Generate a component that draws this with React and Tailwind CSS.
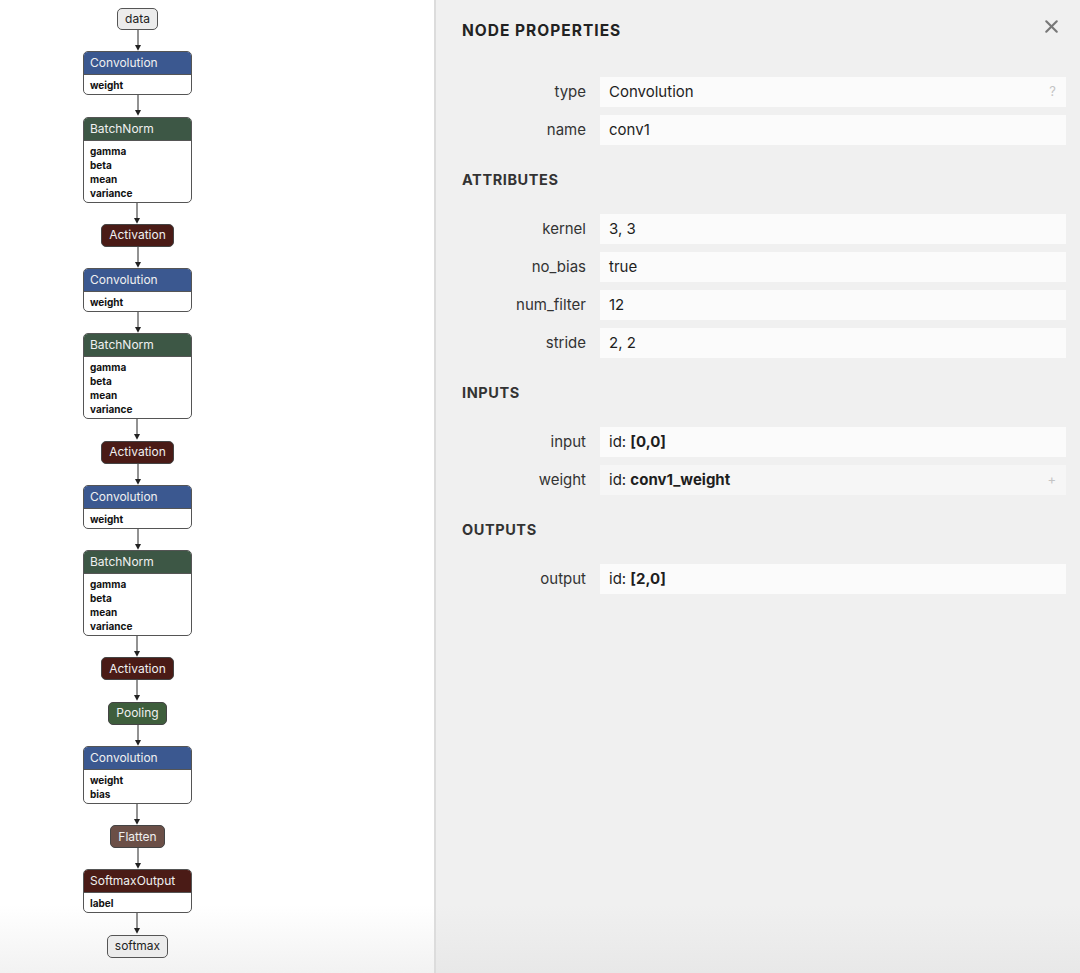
import { X } from "lucide-react";

const font = { fontFamily: "Inter, 'Noto Sans', sans-serif" };

const graph = [
  { kind: "io", label: "data", h: "h-[22px]" },
  { kind: "op", label: "Convolution", color: "bg-[#3b5890]", attrs: ["weight"] },
  { kind: "op", label: "BatchNorm", color: "bg-[#3d5745]", attrs: ["gamma", "beta", "mean", "variance"] },
  { kind: "pill", label: "Activation", color: "bg-[#4a1b16]" },
  { kind: "op", label: "Convolution", color: "bg-[#3b5890]", attrs: ["weight"] },
  { kind: "op", label: "BatchNorm", color: "bg-[#3d5745]", attrs: ["gamma", "beta", "mean", "variance"] },
  { kind: "pill", label: "Activation", color: "bg-[#4a1b16]" },
  { kind: "op", label: "Convolution", color: "bg-[#3b5890]", attrs: ["weight"] },
  { kind: "op", label: "BatchNorm", color: "bg-[#3d5745]", attrs: ["gamma", "beta", "mean", "variance"] },
  { kind: "pill", label: "Activation", color: "bg-[#4a1b16]" },
  { kind: "pill", label: "Pooling", color: "bg-[#3e5e3c]" },
  { kind: "op", label: "Convolution", color: "bg-[#3b5890]", attrs: ["weight", "bias"] },
  { kind: "pill", label: "Flatten", color: "bg-[#6b4f47]" },
  { kind: "op", label: "SoftmaxOutput", color: "bg-[#4a1b16]", attrs: ["label"] },
  { kind: "io", label: "softmax", h: "h-[23px]" },
];

function Arrow() {
  return (
    <svg
      viewBox="0 0 10 22"
      preserveAspectRatio="none"
      className="block h-[21.25px] w-[10px] shrink-0"
    >
      <line x1="5" y1="0" x2="5" y2="17" stroke="#222" strokeWidth="1" />
      <path d="M2 15.5 L5 21.5 L8 15.5 Z" fill="#222" />
    </svg>
  );
}

function GraphNode({ node }) {
  if (node.kind === "io") {
    return (
      <div
        className={
          "flex items-center rounded-[5px] border border-[#555] bg-[#ececec] px-[7px] text-[12px] text-[#222] " +
          node.h
        }
      >
        {node.label}
      </div>
    );
  }
  if (node.kind === "pill") {
    return (
      <div
        className={
          "flex h-[23px] items-center rounded-[5px] border border-[#444] px-[7px] text-[12px] text-[#f0f0f0] " +
          node.color
        }
      >
        {node.label}
      </div>
    );
  }
  return (
    <div className="w-[109px] overflow-hidden rounded-[5px] border border-[#555] bg-white">
      <div
        className={
          "flex h-[22px] items-center px-[6px] text-[12px] text-[#f0f0f0] " + node.color
        }
      >
        {node.label}
      </div>
      <div className="border-t border-[#555] px-[6px] pt-[3px] pb-[2px]">
        {node.attrs.map((a) => (
          <div key={a} className="text-[10px] font-bold leading-[14px] text-[#111]">
            {a}
          </div>
        ))}
      </div>
    </div>
  );
}

function Row({ label, children, hint, muted }) {
  return (
    <div className="flex items-center">
      <div className="w-[125px] shrink-0 pr-px text-right text-[15px] text-[#333]">
        {label}
      </div>
      <div
        className={
          "ml-[13px] flex h-[30px] flex-1 items-center justify-between pl-[9px] pr-[10px] text-[15px] text-[#1e1e1e] " +
          (muted ? "bg-[#f6f6f6]" : "bg-[#fbfbfb]")
        }
      >
        <span>{children}</span>
        {hint && <span className="text-[13px] text-[#c4c4c4]">{hint}</span>}
      </div>
    </div>
  );
}

function Section({ title }) {
  return (
    <h3 className="mt-[25px] mb-[24px] h-[20px] text-[14.5px] font-bold leading-[20px] tracking-[0.04em] text-[#333]">
      {title}
    </h3>
  );
}

export default function App() {
  return (
    <div className="flex h-[973px] w-[1080px] overflow-hidden" style={font}>
      <div className="w-[434px] shrink-0 bg-linear-to-b from-white from-[93%] to-[#f2f2f2] pt-[8px]">
        <div className="ml-[83px] flex w-[109px] flex-col items-center">
          {graph.map((node, i) => (
            <div key={i} className="flex flex-col items-center">
              {i > 0 && <Arrow />}
              <GraphNode node={node} />
            </div>
          ))}
        </div>
      </div>

      <div className="relative flex-1 border-l-2 border-[#dcdcdc] bg-linear-to-b from-[#f0f0f0] from-[93%] to-[#e8e8e8] pt-[21px] pl-[26px] pr-[14px]">
        <button
          type="button"
          aria-label="Close"
          className="absolute top-[16px] right-[18px] text-[#777]"
        >
          <X className="h-[21px] w-[21px]" strokeWidth={2.4} />
        </button>

        <h2 className="h-[20px] text-[15.5px] font-bold leading-[20px] tracking-[0.065em] text-[#222]">
          NODE PROPERTIES
        </h2>

        <div className="mt-[36px] flex flex-col gap-[8px]">
          <Row label="type" hint="?">Convolution</Row>
          <Row label="name">conv1</Row>
        </div>

        <Section title="ATTRIBUTES" />
        <div className="flex flex-col gap-[8px]">
          <Row label="kernel">3, 3</Row>
          <Row label="no_bias">true</Row>
          <Row label="num_filter">12</Row>
          <Row label="stride">2, 2</Row>
        </div>

        <Section title="INPUTS" />
        <div className="flex flex-col gap-[8px]">
          <Row label="input">
            id: <b className="font-bold">[0,0]</b>
          </Row>
          <Row label="weight" hint="+" muted>
            id: <b className="font-bold">conv1_weight</b>
          </Row>
        </div>

        <Section title="OUTPUTS" />
        <div className="flex flex-col gap-[8px]">
          <Row label="output">
            id: <b className="font-bold">[2,0]</b>
          </Row>
        </div>
      </div>
    </div>
  );
}
